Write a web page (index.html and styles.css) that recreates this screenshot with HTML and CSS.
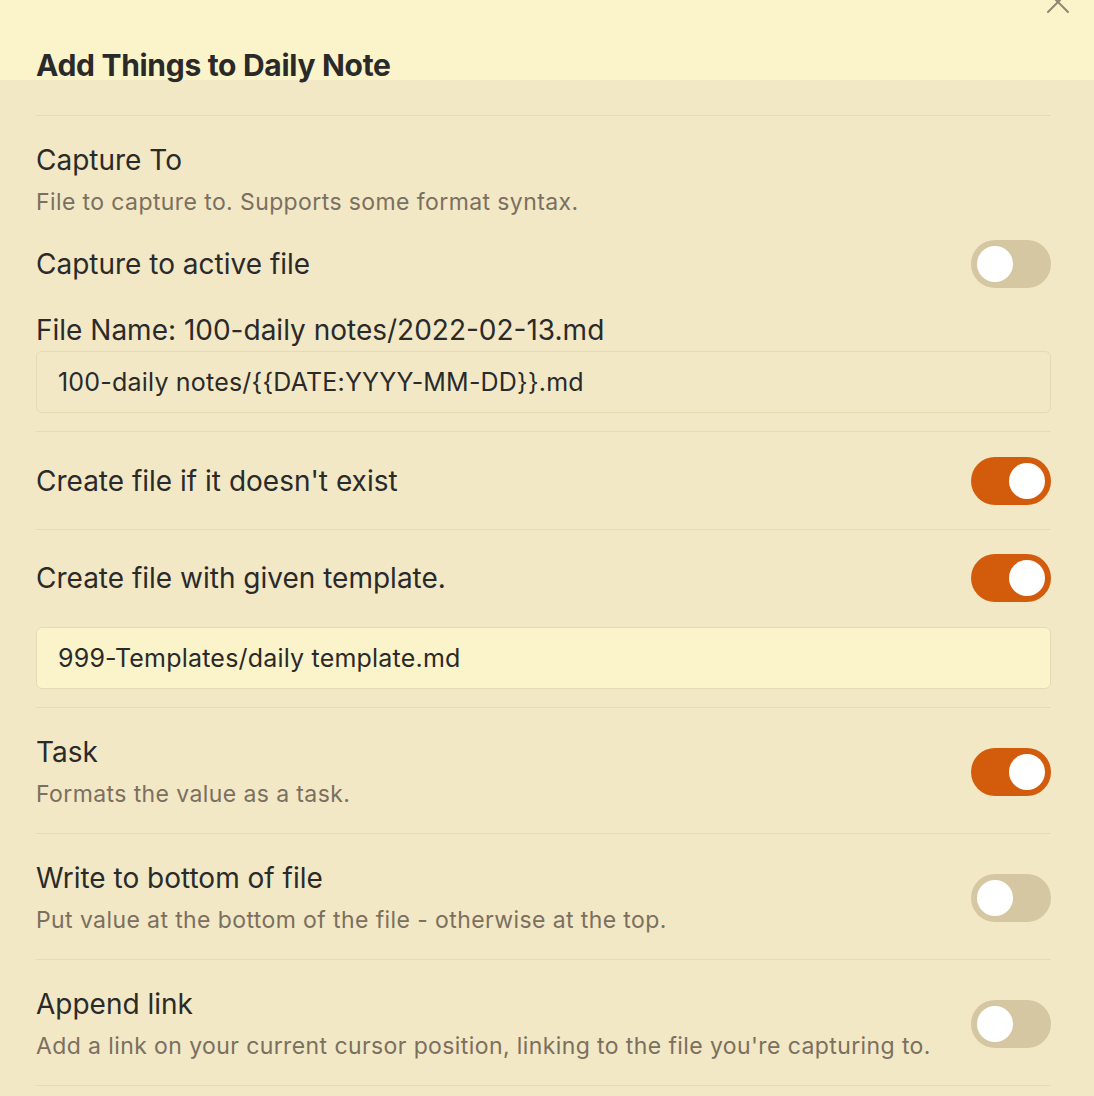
FILE: index.html
```html
<!DOCTYPE html>
<html lang="en">
<head>
    <meta charset="UTF-8">
    <meta name="viewport" content="width=device-width, initial-scale=1.0">
    <title>Add Things to Daily Note</title>
    <link rel="stylesheet" href="styles.css">
</head>
<body>

    <div class="modal">
        <button class="close" aria-label="Close">
            <svg width="28" height="28" viewBox="0 0 28 28"><path d="M4 4 L24 24 M24 4 L4 24" stroke="#8f8672" stroke-width="2" fill="none" stroke-linecap="round"/></svg>
        </button>

        <header class="modal-header">
            <h1>Add Things to Daily Note</h1>
        </header>

        <div class="content">
            <!-- Capture To -->
            <div class="setting group">
                <div class="name">Capture To</div>
                <div class="desc">File to capture to. Supports some format syntax.</div>

                <div class="inline-row">
                    <div class="name">Capture to active file</div>
                    <div class="toggle"></div>
                </div>

                <div class="name file-label">File Name: 100-daily notes/2022-02-13.md</div>
                <input class="text-input" type="text" value="100-daily notes/{{DATE:YYYY-MM-DD}}.md">
            </div>

            <div class="setting row">
                <div class="info">
                    <div class="name">Create file if it doesn't exist</div>
                </div>
                <div class="toggle on"></div>
            </div>

            <div class="setting template">
                <div class="inline-row">
                    <div class="name">Create file with given template.</div>
                    <div class="toggle on"></div>
                </div>
                <input class="text-input light" type="text" value="999-Templates/daily template.md">
            </div>

            <div class="setting row tall">
                <div class="info">
                    <div class="name">Task</div>
                    <div class="desc">Formats the value as a task.</div>
                </div>
                <div class="toggle on"></div>
            </div>

            <div class="setting row tall">
                <div class="info">
                    <div class="name">Write to bottom of file</div>
                    <div class="desc">Put value at the bottom of the file - otherwise at the top.</div>
                </div>
                <div class="toggle"></div>
            </div>

            <div class="setting row tall">
                <div class="info">
                    <div class="name">Append link</div>
                    <div class="desc">Add a link on your current cursor position, linking to the file you're capturing to.</div>
                </div>
                <div class="toggle"></div>
            </div>

            <div class="setting end"></div>
        </div>
    </div>

</body>
</html>
```

FILE: styles.css
```css
body {
    margin: 0;
    font-family: Inter, "Noto Sans", sans-serif;
    background-color: #f2e8c5;
    color: #2a2a2a;
}
.modal {
    position: relative;
    height: 1096px;
    overflow: hidden;
}
.close {
    position: absolute;
    top: -12px;
    right: 22px;
    background: none;
    border: none;
    padding: 0;
}
.modal-header {
    background-color: #fbf3c9;
    height: 80px;
    padding: 45px 36px 0;
    box-sizing: border-box;
}
h1 {
    margin: 0;
    font-size: 30px;
    line-height: 40px;
    font-weight: 700;
    letter-spacing: -0.3px;
}
.content {
    padding: 35px 43px 0 36px;
}
.setting {
    border-top: 1px solid #e7dbb3;
}
.name {
    font-size: 28px;
    line-height: 36px;
}
.desc {
    font-size: 23px;
    line-height: 32px;
    letter-spacing: 0.4px;
    color: #7b6f60;
    margin-top: 8px;
}
.group {
    padding: 26px 0 18px;
}
.inline-row {
    display: flex;
    justify-content: space-between;
    align-items: center;
    height: 48px;
}
.group .inline-row {
    margin-top: 22px;
}
.file-label {
    margin-top: 24px;
}
.text-input {
    display: block;
    width: 100%;
    box-sizing: border-box;
    height: 62px;
    margin-top: 3px;
    padding: 0 21px;
    border: 1px solid #e6dab2;
    border-radius: 6px;
    background-color: #f2e8c5;
    font-family: inherit;
    font-size: 25px;
    letter-spacing: 0.2px;
    color: #2a2a2a;
}
.text-input.light {
    background-color: #fbf3c9;
}
.row {
    display: flex;
    justify-content: space-between;
    align-items: center;
    height: 98px;
    box-sizing: border-box;
}
.row.tall {
    height: 126px;
    padding: 26px 0 24px;
    align-items: center;
}
.template {
    padding: 24px 0 18px;
}
.template .text-input {
    margin-top: 25px;
}
.toggle {
    flex-shrink: 0;
    width: 80px;
    height: 48px;
    border-radius: 24px;
    background-color: #d6c7a3;
    position: relative;
}
.toggle::after {
    content: "";
    position: absolute;
    top: 6px;
    left: 6px;
    width: 36px;
    height: 36px;
    border-radius: 50%;
    background-color: #ffffff;
}
.toggle.on {
    background-color: #d35b0c;
}
.toggle.on::after {
    left: 38px;
}
```
